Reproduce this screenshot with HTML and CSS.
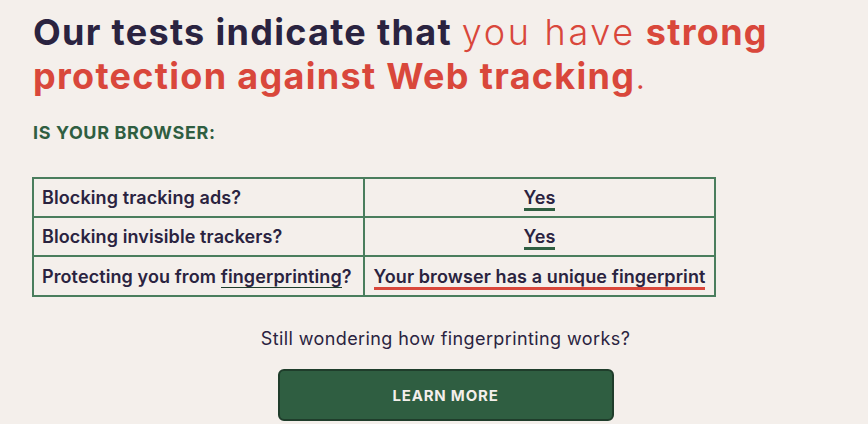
FILE: index.html
```html
<!DOCTYPE html>
<html lang="en">
<head>
    <meta charset="UTF-8">
    <meta name="viewport" content="width=device-width, initial-scale=1.0">
    <title>Cover Your Tracks - Results</title>
    <link rel="stylesheet" href="styles.css">
</head>
<body>
    <div class="container">
        <!-- Result headline -->
        <h1 class="headline">Our tests indicate that <span class="light-red wide">you have</span> <span class="red">strong protection against Web tracking</span><span class="light-red">.</span></h1>

        <h2 class="subhead">IS YOUR BROWSER:</h2>

        <!-- Results table -->
        <table class="results">
            <tr>
                <td class="question">Blocking tracking ads?</td>
                <td class="answer"><span class="good">Yes</span></td>
            </tr>
            <tr>
                <td class="question">Blocking invisible trackers?</td>
                <td class="answer"><span class="good">Yes</span></td>
            </tr>
            <tr class="last">
                <td class="question">Protecting you from <a href="#" class="term">fingerprinting</a>?</td>
                <td class="answer"><span class="bad">Your browser has a unique fingerprint</span></td>
            </tr>
        </table>

        <p class="wondering">Still wondering how fingerprinting works?</p>
        <div class="actions">
            <button class="learn-more">LEARN MORE</button>
        </div>
    </div>
</body>
</html>
```

FILE: styles.css
```css
/* Base */
body {
    margin: 0;
    padding: 0;
    background-color: #f4efeb;
    font-family: Inter, "Open Sans", sans-serif;
    color: #2a2340;
}

.container {
    width: 825px;
    padding: 10px 0 0 33px;
}

/* Headline */
.headline {
    margin: 0;
    font-size: 36px;
    line-height: 44px;
    font-weight: 700;
    color: #2a2340;
    letter-spacing: 1.3px;
}

.headline .light-red {
    color: #d9473b;
    font-weight: 300;
}

.headline .wide {
    letter-spacing: 2.7px;
}

.headline .red {
    color: #d9473b;
}

.subhead {
    margin: 24px 0 33px;
    font-size: 18px;
    line-height: 22px;
    font-weight: 700;
    color: #2f5e41;
    letter-spacing: 0.6px;
}

/* Table */
.results {
    border-collapse: collapse;
    width: 684px;
    margin-left: -1px;
}

.results td {
    border: 2px solid #4a7d5d;
    height: 37px;
    padding: 0 8px;
    font-size: 18px;
    font-weight: 600;
    letter-spacing: 0.1px;
}

.results .last td {
    height: 38px;
}

.results .question {
    width: 313px;
}

.results .answer {
    text-align: center;
}

.good {
    border-bottom: 3px solid #2f5e41;
}

.bad {
    border-bottom: 3px solid #d9473b;
}

.term {
    color: #2a2340;
    text-decoration: none;
    border-bottom: 1px solid #1f3d2b;
}

/* Call to action */
.wondering {
    margin: 31px 0 19px;
    text-align: center;
    font-size: 18px;
    line-height: 22px;
    letter-spacing: 0.4px;
}

.actions {
    text-align: center;
}

.learn-more {
    width: 336px;
    height: 52px;
    background-color: #2f5e41;
    border: 2px solid #1f3d2b;
    border-radius: 6px;
    color: #f4efeb;
    font-family: inherit;
    font-size: 15px;
    font-weight: 700;
    letter-spacing: 0.8px;
    cursor: pointer;
}
```
